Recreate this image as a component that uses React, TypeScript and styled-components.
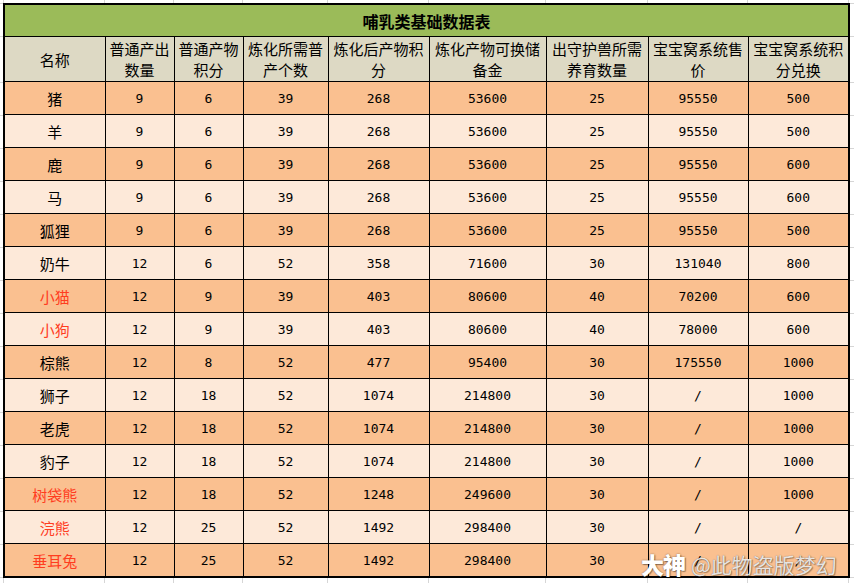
import React from "react";
import styled, { createGlobalStyle } from "styled-components";

const Global = createGlobalStyle`
  html, body { margin: 0; padding: 0; background: #fff; }
  body { font-family: "Noto Sans CJK SC", "Noto Sans", sans-serif; }
`;

const colX = [3, 104, 173, 242, 327, 428, 545, 647, 747, 848];
const rowY = [3, 36, 82, ...Array.from({ length: 16 }, (_, i) => 82 + 33 * (i + 1))];
const grid = "#d6d6d6";
const gridBg = [
  ...colX.map((x) => `linear-gradient(${grid}, ${grid}) ${x}px 0 / 1px 100% no-repeat`),
  ...rowY.map((y) => `linear-gradient(${grid}, ${grid}) 0 ${y}px / 100% 1px no-repeat`),
].join(", ");

const Sheet = styled.div`
  position: relative;
  width: 854px;
  height: 583px;
  box-sizing: border-box;
  padding: 3px 0 0 3px;
  background: ${gridBg};
  background-color: #fff;
  overflow: hidden;
`;

const Table = styled.table`
  border-collapse: collapse;
  table-layout: fixed;
  width: 846px;
  border: 2px solid #000;
  color: #000;
`;

const TitleCell = styled.th`
  height: 31px;
  padding: 0;
  background: #9bbb59;
  border: 1px solid #000;
  font-size: 16px;
  font-weight: 700;
  text-align: center;
  vertical-align: middle;
`;

const HeadCell = styled.th`
  height: 44px;
  padding: 0 2px;
  background: #ddd9c4;
  border: 1px solid #000;
  font-size: 15px;
  font-weight: 400;
  line-height: 21px;
  text-align: center;
  vertical-align: middle;
`;

const Cell = styled.td<{ $tone: "dark" | "light"; $name?: boolean; $red?: boolean }>`
  height: 32px;
  padding: 0;
  background: ${(p) => (p.$tone === "dark" ? "#fac090" : "#fde9d9")};
  border: 1px solid #000;
  text-align: center;
  vertical-align: middle;
  font-family: ${(p) =>
    p.$name ? `"Noto Sans CJK SC", sans-serif` : `"DejaVu Sans Mono", "Liberation Mono", monospace`};
  font-size: ${(p) => (p.$name ? "15px" : "13px")};
  color: ${(p) => (p.$red ? "#ff3d1f" : "#000")};
`;

const Watermark = styled.div`
  position: absolute;
  left: 641px;
  top: 547px;
  display: flex;
  align-items: center;
  gap: 6px;
  pointer-events: none;
  white-space: nowrap;
`;

const Brand = styled.span`
  font-family: "Noto Sans CJK SC", sans-serif;
  font-size: 23px;
  font-weight: 900;
  color: #fff;
  text-shadow: 0 0 2px rgba(0, 0, 0, 0.45), 1px 1px 1px rgba(0, 0, 0, 0.35);
  letter-spacing: -1px;
`;

const Handle = styled.span`
  font-family: "Noto Sans CJK SC", sans-serif;
  font-size: 21px;
  font-weight: 400;
  color: rgba(255, 255, 255, 0.85);
  text-shadow: 0 0 1px rgba(0, 0, 0, 0.55), 1px 1px 1px rgba(0, 0, 0, 0.3);
`;

const widths = [101, 69, 69, 85, 101, 117, 102, 100, 101];

const headers = [
  "名称",
  "普通产出数量",
  "普通产物积分",
  "炼化所需普产个数",
  "炼化后产物积分",
  "炼化产物可换储备金",
  "出守护兽所需养育数量",
  "宝宝窝系统售价",
  "宝宝窝系统积分兑换",
];

type Row = { name: string; red?: boolean; v: string[] };

const rows: Row[] = [
  { name: "猪", v: ["9", "6", "39", "268", "53600", "25", "95550", "500"] },
  { name: "羊", v: ["9", "6", "39", "268", "53600", "25", "95550", "500"] },
  { name: "鹿", v: ["9", "6", "39", "268", "53600", "25", "95550", "600"] },
  { name: "马", v: ["9", "6", "39", "268", "53600", "25", "95550", "600"] },
  { name: "狐狸", v: ["9", "6", "39", "268", "53600", "25", "95550", "500"] },
  { name: "奶牛", v: ["12", "6", "52", "358", "71600", "30", "131040", "800"] },
  { name: "小猫", red: true, v: ["12", "9", "39", "403", "80600", "40", "70200", "600"] },
  { name: "小狗", red: true, v: ["12", "9", "39", "403", "80600", "40", "78000", "600"] },
  { name: "棕熊", v: ["12", "8", "52", "477", "95400", "30", "175550", "1000"] },
  { name: "狮子", v: ["12", "18", "52", "1074", "214800", "30", "/", "1000"] },
  { name: "老虎", v: ["12", "18", "52", "1074", "214800", "30", "/", "1000"] },
  { name: "豹子", v: ["12", "18", "52", "1074", "214800", "30", "/", "1000"] },
  { name: "树袋熊", red: true, v: ["12", "18", "52", "1248", "249600", "30", "/", "1000"] },
  { name: "浣熊", red: true, v: ["12", "25", "52", "1492", "298400", "30", "/", "/"] },
  { name: "垂耳兔", red: true, v: ["12", "25", "52", "1492", "298400", "30", "/", "/"] },
];

export default function App() {
  return (
    <>
      <Global />
      <Sheet>
        <Table>
          <colgroup>
            {widths.map((w, i) => (
              <col key={i} style={{ width: w }} />
            ))}
          </colgroup>
          <thead>
            <tr>
              <TitleCell colSpan={9}>哺乳类基础数据表</TitleCell>
            </tr>
            <tr>
              {headers.map((h) => (
                <HeadCell key={h}>{h}</HeadCell>
              ))}
            </tr>
          </thead>
          <tbody>
            {rows.map((r, i) => {
              const tone = i % 2 === 0 ? "dark" : "light";
              return (
                <tr key={r.name}>
                  <Cell $tone={tone} $name $red={r.red}>
                    {r.name}
                  </Cell>
                  {r.v.map((v, j) => (
                    <Cell key={j} $tone={tone}>
                      {v}
                    </Cell>
                  ))}
                </tr>
              );
            })}
          </tbody>
        </Table>
        <Watermark>
          <Brand>大神</Brand>
          <Handle>@此物盗版梦幻</Handle>
        </Watermark>
      </Sheet>
    </>
  );
}
